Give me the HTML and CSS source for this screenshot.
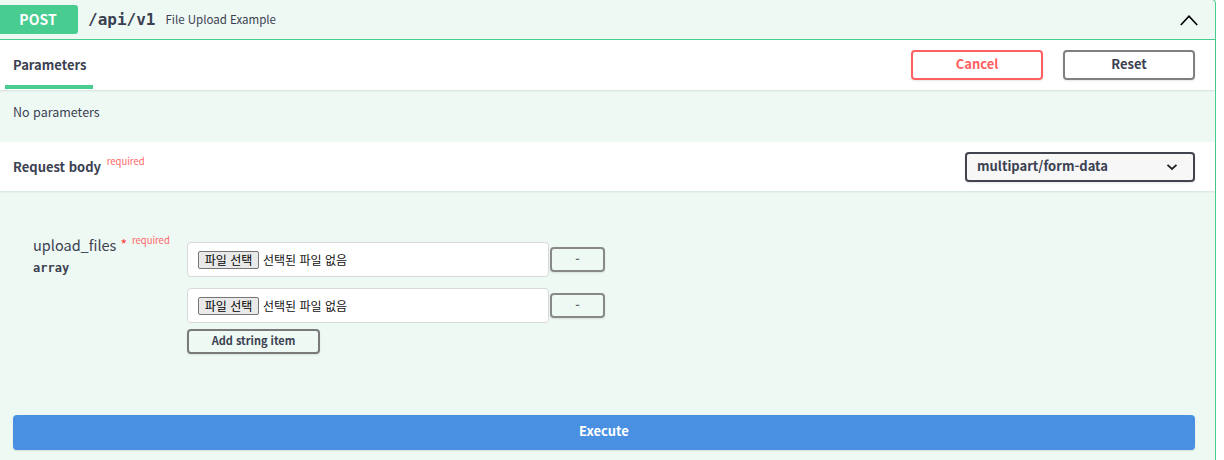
FILE: index.html
```html
<!DOCTYPE html>
<html lang="ko">
<head>
<meta charset="utf-8">
<title>File Upload Example</title>
<link rel="stylesheet" href="styles.css">
</head>
<body>
<div class="opblock">
  <div class="summary">
    <span class="method">POST</span>
    <span class="path">/api/v1</span>
    <span class="desc">File Upload Example</span>
    <svg class="arrow" width="18" height="11" viewBox="0 0 18 11"><polyline points="0.8,10 9,1.2 17.2,10" fill="none" stroke="#000" stroke-width="1.6"/></svg>
  </div>

  <div class="section-header">
    <div class="tab">Parameters</div>
    <div class="actions">
      <button class="btn btn-cancel">Cancel</button>
      <button class="btn btn-reset">Reset</button>
    </div>
  </div>

  <div class="no-params">No parameters</div>

  <div class="section-header rb-header">
    <div class="rb-title">Request body <sup class="req">required</sup></div>
    <div class="select">
      <span>multipart/form-data</span>
      <svg width="12" height="8" viewBox="0 0 12 8"><polyline points="1.5,1.8 6,6 10.5,1.8" fill="none" stroke="#222" stroke-width="1.8"/></svg>
    </div>
  </div>

  <div class="body">
    <div class="param-row">
      <div class="param-name">
        <div class="name-line"><span class="pname">upload_files</span><span class="star">*</span><span class="req2">required</span></div>
        <div class="ptype">array</div>
      </div>
      <div class="param-values">
        <div class="item">
          <div class="filebox"><span class="filebtn">파일 선택</span><span class="filetext">선택된 파일 없음</span></div>
          <button class="btn-minus">-</button>
        </div>
        <div class="item">
          <div class="filebox"><span class="filebtn">파일 선택</span><span class="filetext">선택된 파일 없음</span></div>
          <button class="btn-minus">-</button>
        </div>
        <button class="btn-add">Add string item</button>
      </div>
    </div>
    <button class="execute">Execute</button>
  </div>
</div>
</body>
</html>
```

FILE: styles.css
```css
html, body {
  margin: 0;
  padding: 0;
  background: #fff;
  overflow: hidden;
  width: 1224px;
  height: 460px;
}
body {
  font-family: "Noto Sans CJK KR", "Noto Sans", sans-serif;
  color: #3b4151;
}
.opblock {
  box-sizing: border-box;
  width: 1224px;
  margin: -1px 0 0 -8px;
  border: 1px solid #49cc90;
  border-radius: 4px;
  background: #eef9f4;
  min-height: 470px;
}
.summary {
  display: flex;
  align-items: center;
  padding: 5px;
  border-bottom: 1px solid #49cc90;
}
.method {
  min-width: 80px;
  padding: 6px 0;
  line-height: 17px;
  font-size: 14px;
  font-weight: 700;
  text-align: center;
  color: #fff;
  background: #49cc90;
  border-radius: 3px;
}
.path {
  padding: 0 10px;
  font-family: "DejaVu Sans Mono", monospace;
  font-size: 16px;
  font-weight: 700;
  line-height: 20px;
}
.desc {
  flex: 1;
  font-size: 11.5px;
  line-height: 16px;
  margin-top: -1px;
}
.arrow {
  margin-right: 12px;
  margin-top: 1px;
}
.section-header {
  display: flex;
  align-items: center;
  justify-content: space-between;
  height: 50px;
  padding: 0 20px 0 12px;
  background: #fff;
  box-shadow: 0 1px 2px rgba(0,0,0,.1);
  position: relative;
}
.tab {
  position: relative;
  align-self: stretch;
  display: flex;
  align-items: center;
  padding: 0 7px 1px 8px;
  font-size: 13px;
  font-weight: 700;
  line-height: 18px;
}
.tab::after {
  content: "";
  position: absolute;
  left: 0;
  right: 0;
  bottom: 1px;
  height: 4px;
  background: #49cc90;
}
.actions {
  display: flex;
  gap: 20px;
}
.btn {
  box-sizing: border-box;
  width: 132px;
  height: 30px;
  border-radius: 4px;
  background: transparent;
  font-family: inherit;
  font-size: 13px;
  font-weight: 700;
  line-height: 18px;
  padding: 0 0 3px;
  box-shadow: 0 1px 2px rgba(0,0,0,.1);
}
.btn-cancel {
  border: 2px solid #ff6060;
  color: #ff6060;
}
.btn-reset {
  border: 2px solid #808080;
  color: #3b4151;
}
.no-params {
  height: 52px;
  box-sizing: border-box;
  padding: 13px 20px 0;
  font-size: 12.5px;
  line-height: 18px;
}
.rb-header {
  padding-left: 20px;
  height: 49px;
}
.rb-title {
  font-size: 13px;
  font-weight: 700;
  line-height: 18px;
  margin-top: -3px;
}
.req {
  font-size: 9.5px;
  font-weight: 400;
  color: #ff6666;
  position: relative;
  top: -2px;
  margin-left: 2px;
}
.select {
  box-sizing: border-box;
  width: 230px;
  height: 30px;
  display: flex;
  align-items: center;
  justify-content: space-between;
  padding: 0 15px 2px 10px;
  border: 2px solid #41444e;
  border-radius: 4px;
  background: #f7f7f7;
  box-shadow: 0 1px 2px rgba(0,0,0,.1);
  font-size: 13px;
  font-weight: 700;
  line-height: 18px;
}
.select svg {
  margin-top: 2px;
}
.body {
  padding: 51px 20px 20px;
}
.param-row {
  display: flex;
  padding-left: 20px;
}
.param-name {
  width: 154px;
  margin-top: -8px;
}
.name-line {
  display: flex;
  align-items: flex-start;
}
.pname {
  font-size: 14.5px;
  line-height: 22px;
}
.star {
  color: #f93e3e;
  font-size: 14px;
  line-height: 16px;
  margin: 2px 0 0 4px;
}
.req2 {
  color: #ff6666;
  font-size: 9.5px;
  line-height: 12px;
  margin-left: 5px;
}
.ptype {
  font-family: "DejaVu Sans Mono", monospace;
  font-size: 12px;
  font-weight: 700;
  line-height: 16px;
  margin-top: 4px;
}
.param-values {
  display: flex;
  flex-direction: column;
  align-items: flex-start;
}
.item {
  display: flex;
  align-items: center;
  margin-bottom: 11px;
}
.item + .item {
  margin-bottom: 6px;
}
.filebox {
  box-sizing: border-box;
  width: 362px;
  height: 35px;
  display: flex;
  align-items: center;
  padding-left: 10px;
  background: #fff;
  border: 1px solid #d9d9d9;
  border-radius: 4px;
}
.filebtn {
  box-sizing: border-box;
  width: 61px;
  height: 18px;
  display: flex;
  align-items: center;
  justify-content: center;
  background: #e9e9e9;
  border: 1px solid #767676;
  border-radius: 2px;
  font-size: 12px;
  line-height: 14px;
  color: #000;
}
.filetext {
  margin-left: 4px;
  font-size: 12px;
  line-height: 14px;
  color: #111;
}
.btn-minus {
  box-sizing: border-box;
  width: 55px;
  height: 25px;
  margin-left: 1px;
  padding: 0 0 2px;
  background: transparent;
  border: 2px solid #888;
  border-radius: 4px;
  color: #666;
  font-family: inherit;
  font-size: 12px;
  font-weight: 700;
  line-height: 14px;
  box-shadow: 0 1px 2px rgba(0,0,0,.1);
}
.btn-add {
  box-sizing: border-box;
  width: 133px;
  height: 25px;
  padding: 0 0 3px;
  background: transparent;
  border: 2px solid #7a7a7a;
  border-radius: 4px;
  color: #3b4151;
  font-family: inherit;
  font-size: 11px;
  font-weight: 700;
  line-height: 14px;
  box-shadow: 0 1px 2px rgba(0,0,0,.1);
}
.execute {
  display: block;
  width: 100%;
  height: 35px;
  margin-top: 61px;
  padding: 0 0 3px;
  border: none;
  border-radius: 4px;
  background: #4990e2;
  color: #fff;
  font-family: inherit;
  font-size: 13px;
  font-weight: 700;
  line-height: 18px;
  box-shadow: 0 1px 2px rgba(0,0,0,.1);
}
```
